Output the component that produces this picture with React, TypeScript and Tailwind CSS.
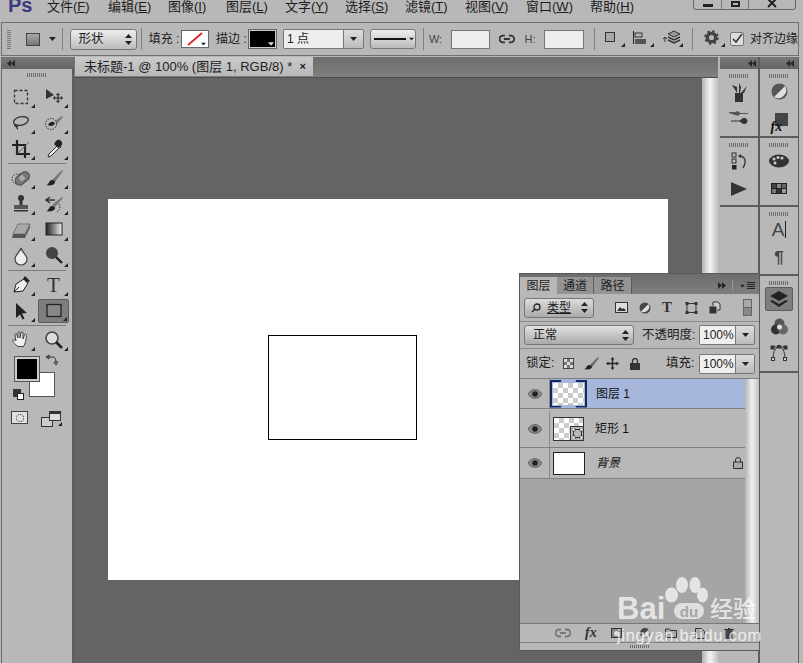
import React from "react";

const Grip = ({ className = "" }: { className?: string }) => (
  <div className={"h-[4px] w-[20px] bg-[repeating-linear-gradient(90deg,#6d6d6d_0_1px,transparent_1px_2px)] " + className} />
);

const Corner = () => (
  <svg className="absolute right-[1px] bottom-[1px]" width="4" height="4" viewBox="0 0 4 4"><path d="M4 0V4H0Z" fill="#222" /></svg>
);

const Ic = ({ children, s = 20, className = "" }: { children: React.ReactNode; s?: number; className?: string }) => (
  <svg width={s} height={s} viewBox="0 0 20 20" className={className}>{children}</svg>
);

const toolIcons: Record<string, React.ReactNode> = {
  marquee: <rect x="3.500" y="3.500" width="13" height="13" fill="none" stroke="#333" strokeWidth="1.300" strokeDasharray="3 2" />,
  move: <g fill="#333"><path d="M2 2 L10 8 L2 12Z" /><path d="M14 6l2 2h-1.400v2.400H17V9l2 2-2 2v-1.400h-2.400V14H16l-2 2-2-2h1.400v-2.400H11V13l-2-2 2-2v1.400h2.400V8H12z" stroke="#333" strokeWidth=".2" /></g>,
  lasso: <g fill="none" stroke="#333" strokeWidth="1.400"><ellipse cx="10" cy="8" rx="7.500" ry="4.200" transform="rotate(-12 10 8)" /><path d="M4 11c-1 2 1 3 2 2s-1 3 1 3" /></g>,
  quick: <g><circle cx="7" cy="11" r="5.500" fill="none" stroke="#222" strokeDasharray="1.500 1.200" /><path d="M4 12c2-4 5-4 7-2-1 3-4 4-7 2z" fill="#222" /><path d="M11 8l7-5 1 1-6 7z" fill="#777" /></g>,
  crop: <g fill="none" stroke="#222" strokeWidth="2.200"><path d="M6 1v14h13" /><path d="M1 6h13v13" /><path d="M6 15L18 3" strokeWidth=".8" stroke="#555" /></g>,
  picker: <g><path d="M12 3l5 5-2 1-8 8-3 1 1-3 8-8z" fill="#eee" stroke="#333" /><path d="M12 2c2-2 4-1 5 0s2 3 0 5l-3 2-4-4z" fill="#222" /></g>,
  heal: <g><circle cx="6" cy="11" r="5" fill="none" stroke="#333" strokeDasharray="1.500 1.200" /><rect x="3" y="6" width="16" height="9" rx="4.500" transform="rotate(-40 11 10)" fill="#777" stroke="#444" /><rect x="8.500" y="7.500" width="5" height="5" transform="rotate(-40 11 10)" fill="#aaa" /></g>,
  brush: <g><path d="M8 12L18 2l1 1-8 11z" fill="#777" /><path d="M2 17c3 0 3-5 6-5 2 0 3 1 3 2 0 3-5 4-9 3z" fill="#222" /></g>,
  stamp: <g fill="#333"><circle cx="10" cy="4" r="3" /><rect x="8.500" y="6" width="3" height="5" /><rect x="3" y="11" width="14" height="4" fill="#555" /><rect x="3" y="16" width="14" height="1.500" /></g>,
  history: <g><path d="M3 6h8M6 3L2 6l4 3" fill="none" stroke="#333" strokeWidth="1.500" /><path d="M8 11L18 3l1 1-8 9z" fill="#777" /><path d="M2 17c3 0 3-5 6-5 2 0 3 1 3 2 0 3-5 4-9 3z" fill="#222" /><path d="M15 10c2 3 1 6-2 8" fill="none" stroke="#333" strokeDasharray="1.500 1.200" /></g>,
  eraser: <g><path d="M7 4h12l-5 10H2z" fill="#aaa" stroke="#777" /><path d="M2 14h12v4H1z" fill="#555" /><path d="M14 14l5-10v4l-5 10z" fill="#666" /></g>,
  gradient: <g><defs><linearGradient id="gr"><stop offset="0" stopColor="#222" /><stop offset="1" stopColor="#eee" /></linearGradient></defs><rect x="2" y="3" width="16" height="12" fill="url(#gr)" stroke="#222" strokeWidth="1" /></g>,
  drop: <path d="M10 2c1 4 6 7 6 11a6 6 0 0 1-12 0c0-4 5-7 6-11z" fill="#eee" stroke="#444" strokeWidth="1.200" />,
  burn: <g><circle cx="8" cy="7" r="6" fill="#444" /><path d="M12 11l6 6" stroke="#222" strokeWidth="2.400" /></g>,
  pen: <g><path d="M3 17l2-8 8-5 4 4-5 8z" fill="#eee" stroke="#222" /><path d="M12 4l2-3 5 5-3 2z" fill="#222" /><path d="M3 17l5-5" stroke="#222" /></g>,
  path: <path d="M5 2l11 10-5 .5 2.500 5-2 1-2.500-5-4 3.500z" fill="#222" />,
  shape: <g><rect x="3" y="3.500" width="14" height="12" fill="#888" stroke="#222" strokeWidth="1.300" /></g>,
  hand: <path d="M5 15c-2-2-4-4-3-5s3 1 3 1L4 5c0-1.500 2-1.500 2 0l1 3V3c0-1.500 2-1.500 2 0v5l1-5c0-1.500 2-1.500 2 0v6l1.500-4c.5-1.500 2-1 2 .5-.5 4-1 8-3 11H7z" fill="#eee" stroke="#333" strokeWidth=".9" />,
  zoom: <g><circle cx="8" cy="8" r="6" fill="#ddd" stroke="#444" strokeWidth="1.600" /><path d="M12 12l6 6" stroke="#222" strokeWidth="2.600" /></g>,
};

const Tool = ({ name, active = false }: { name: string; active?: boolean }) => (
  <div className={"relative flex h-[24px] w-[31px] items-center justify-center rounded-[2px] " + (active ? "border border-[#5c5c5c] bg-[#7e7e7e]" : "")}>
    {name === "text" ? (
      <span className="font-['Liberation_Serif'] text-[21px] leading-none text-[#333]">T</span>
    ) : (
      <Ic s={20}>{toolIcons[name]}</Ic>
    )}
    <Corner />
  </div>
);

const Rows = ({ rows }: { rows: [string, string][] }) => (
  <div className="flex flex-col gap-[2px]">
    {rows.map(([a, b], i) => (
      <div key={i} className="flex justify-between px-[3px]">
        <Tool name={a} />
        <Tool name={b} active={b === "shape"} />
      </div>
    ))}
  </div>
);

const HLine = () => <div className="mx-[6px] my-[2px] h-[1px] bg-[#7c7c7c]" />;

const Collapse = ({ right = false }: { right?: boolean }) => (
  <svg width="8" height="7" viewBox="0 0 8 7" className={right ? "rotate-180" : ""}><path d="M4 0v7L0 3.500zM8 0v7L4 3.500z" fill="#262626" /></svg>
);

const Toolbar = () => (
  <div className="flex w-[74px] shrink-0 flex-col pl-[1px]">
    <div className="flex h-[12px] items-center bg-gradient-to-b from-[#777] to-[#666] pl-[6px] text-[#222]">
      <Collapse />
    </div>
    <div className="flex flex-1 flex-col border-l border-r-2 border-l-[#6b6b6b] border-r-[#5c5c5c] bg-[#b8b8b8]">
      <Grip className="mx-auto mt-[4px]" />
      <div className="mt-[8px]" />
      <Rows rows={[["marquee", "move"], ["lasso", "quick"], ["crop", "picker"]]} />
      <HLine />
      <Rows rows={[["heal", "brush"], ["stamp", "history"], ["eraser", "gradient"], ["drop", "burn"]]} />
      <HLine />
      <Rows rows={[["pen", "text"], ["path", "shape"]]} />
      <HLine />
      <Rows rows={[["hand", "zoom"]]} />
      <div className="relative mt-[5px] h-[44px]">
        <div className="absolute left-[27px] top-[15px] h-[25px] w-[26px] border border-[#555] bg-white" />
        <div className="absolute left-[13px] top-0 h-[24px] w-[24px] border-2 border-[#ccc] bg-black outline outline-1 outline-[#555]" />
        <svg className="absolute left-[43px] top-[-3px]" width="14" height="14" viewBox="0 0 14 14"><path d="M2 3h6c2 0 3 2 3 5M1 3l3-2v4zM11 11l-2-3h4z" fill="none" stroke="#333" /></svg>
        <div className="absolute left-[11px] top-[32px] h-[8px] w-[8px] bg-[#333]" />
        <div className="absolute left-[15px] top-[36px] h-[7px] w-[7px] border border-[#222] bg-white" />
      </div>
      <div className="mt-[10px] flex justify-between px-[9px]">
        <div className="flex h-[13px] w-[17px] items-center justify-center border border-[#444] bg-[#e2e2e2]">
          <div className="h-[8px] w-[8px] rounded-full border border-dotted border-[#333]" />
        </div>
        <div className="relative h-[16px] w-[22px]">
          <div className="absolute bottom-0 left-0 h-[10px] w-[12px] border border-[#333] bg-[#ccc]" />
          <div className="absolute right-[2px] top-0 h-[10px] w-[12px] border border-t-[3px] border-[#333] bg-[#ddd]" />
          <Corner />
        </div>
      </div>
    </div>
  </div>
);

const Sep = ({ className = "" }: { className?: string }) => <div className={"h-[22px] w-[1px] bg-[#808080] " + className} />;
const Down = ({ className = "" }: { className?: string }) => (
  <svg width="7" height="4" viewBox="0 0 7 4" className={className}><path d="M0 0h7L3.500 4z" fill="#222" /></svg>
);
const Updown = () => (
  <svg width="7" height="11" viewBox="0 0 7 11"><path d="M3.500 0L7 4H0zM3.500 11L0 7h7z" fill="#222" /></svg>
);
const Field = ({ className = "" }: { className?: string }) => (
  <div className={"h-[19px] border border-[#777] bg-[#eeeeee] " + className} />
);

const Link = ({ color = "#333", className = "" }: { color?: string; className?: string }) => (
  <svg width="16" height="10" viewBox="0 0 16 10" fill="none" stroke={color} strokeWidth="1.800" className={className}>
    <path d="M6 1.500H4a3.500 3.500 0 0 0 0 7h2M10 1.500h2a3.500 3.500 0 0 1 0 7h-2M5 5h6" />
  </svg>
);

const menus: [string, string, string][] = [
  ["文件", "F", "w-[61px]"], ["编辑", "E", "w-[60px]"], ["图像", "I", "w-[58px]"], ["图层", "L", "w-[59px]"], ["文字", "Y", "w-[60px]"],
  ["选择", "S", "w-[60px]"], ["滤镜", "T", "w-[60px]"], ["视图", "V", "w-[61px]"], ["窗口", "W", "w-[64px]"], ["帮助", "H", "w-[50px]"],
];

const MenuBar = () => (
  <div className="relative flex h-[22px] items-start overflow-hidden">
    <span className="ml-[8px] mt-[-6px] w-[39px] text-[20px] font-bold leading-[22px] text-[#3a3a80]">Ps</span>
    <div className="flex">
      {menus.map(([m, k, w]) => (
        <span key={k} className={"whitespace-nowrap text-[13px] leading-[13px] text-[#1c1c1c] " + w}>
          {m}(<span className="underline">{k}</span>)
        </span>
      ))}
    </div>
    <div className="absolute right-[7px] top-[-8px] flex h-[18px] w-[103px] rounded-[3px] border border-[#666] bg-[#b8b8b8]">
      <div className="flex w-[28px] items-center justify-center border-r border-[#777]"><div className="mt-[8px] h-[3px] w-[10px] bg-[#222]" /></div>
      <div className="flex w-[27px] items-center justify-center border-r border-[#777]"><div className="mt-[6px] h-[6px] w-[9px] border-2 border-[#222]" /></div>
      <div className="flex flex-1 justify-center"><svg width="10" height="10" className="mt-[6px]" viewBox="0 0 10 10"><path d="M1 0l8 8M9 0L1 8" stroke="#222" strokeWidth="2" /></svg></div>
    </div>
  </div>
);

const OptionsBar = () => (
  <div className="flex h-[34px] w-[798px] items-center overflow-hidden border border-[#6f6f6f] bg-[#b8b8b8] pl-[5px] text-[12px] text-[#1c1c1c]">
    <div className="h-[20px] w-[4px] bg-[repeating-linear-gradient(0deg,#777_0_1px,transparent_1px_2px)]" />
    <div className="ml-[15px] h-[13px] w-[14px] border border-[#444] bg-gradient-to-b from-[#aaa] to-[#777]" />
    <Down className="ml-[9px]" />
    <Sep className="ml-[6px]" />
    <div className="ml-[7px] flex h-[21px] w-[68px] items-center justify-between rounded-[3px] border border-[#777] bg-gradient-to-b from-[#eee] to-[#bbb] pl-[8px] pr-[4px] text-[12.500px]">
      形状 <Updown />
    </div>
    <Sep className="ml-[4px]" />
    <span className="ml-[7px] w-[33px] whitespace-nowrap">填充 :</span>
    <div className="relative h-[18px] w-[28px] border border-[#666] bg-white">
      <svg width="26" height="16"><path d="M6 14L20 2" stroke="#d22" strokeWidth="1.800" /></svg>
      <Down className="absolute bottom-[1px] right-[1px] scale-75" />
    </div>
    <span className="ml-[7px] w-[34px] whitespace-nowrap">描边 :</span>
    <div className="relative h-[18px] w-[27px] border border-[#ccc] bg-black outline outline-1 outline-[#666]">
      <svg className="absolute bottom-[1px] right-[1px]" width="6" height="4" viewBox="0 0 7 4"><path d="M0 0h7L3.500 4z" fill="#ddd" /></svg>
    </div>
    <div className="ml-[7px] flex h-[20px] w-[82px] items-stretch overflow-hidden rounded-[2px] border border-[#777]">
      <div className="flex-1 bg-[#eeeeee] pl-[3px] leading-[18px]"><span className="font-['Liberation_Sans']">1</span> 点</div>
      <div className="flex w-[20px] items-center justify-center border-l border-[#777] bg-gradient-to-b from-[#ddd] to-[#bbb]"><Down /></div>
    </div>
    <div className="ml-[6px] flex h-[20px] w-[47px] items-center gap-[2px] rounded-[3px] border border-[#777] bg-gradient-to-b from-[#eee] to-[#bbb] pl-[3px]">
      <div className="h-[2px] w-[32px] bg-[#111]" />
      <Down className="scale-75" />
    </div>
    <Sep className="ml-[7px]" />
    <span className="ml-[5px] w-[22px] font-['Liberation_Sans'] text-[11px] text-[#444]">W:</span>
    <Field className="w-[40px]" />
    <Link className="ml-[9px]" />
    <span className="ml-[10px] w-[20px] font-['Liberation_Sans'] text-[11px] text-[#444]">H:</span>
    <Field className="w-[40px]" />
    <Sep className="ml-[10px]" />
    <div className="relative ml-[10px] h-[18px] w-[22px]">
      <div className="mt-[2px] h-[10px] w-[10px] border border-[#333] bg-[#a8a8a8]" />
      <Corner />
    </div>
    <div className="relative ml-[7px] h-[18px] w-[22px]">
      <svg width="14" height="15" viewBox="0 0 14 15"><path d="M.500 1v13" stroke="#222" /><rect x="2" y="3" width="7" height="4" fill="none" stroke="#333" /><rect x="2" y="9" width="11" height="5" fill="#555" /></svg>
      <Corner />
    </div>
    <div className="relative ml-[8px] h-[18px] w-[22px]">
      <svg width="19" height="16" viewBox="0 0 19 16"><path d="M2 12V8M0 9l2-2 2 2" stroke="#333" fill="none" /><path d="M11 1l6 3-6 3-6-3z" fill="#999" stroke="#333" /><path d="M5 7l6 3 6-3M5 10l6 3 6-3" fill="none" stroke="#333" strokeWidth="1.500" /></svg>
      <Corner />
    </div>
    <Sep className="ml-[8px]" />
    <div className="relative ml-[11px] h-[18px] w-[22px]">
      <svg width="15" height="15" viewBox="0 0 16 16"><circle cx="8" cy="8" r="4.500" fill="none" stroke="#444" strokeWidth="3.500" /><circle cx="8" cy="8" r="6.500" fill="none" stroke="#444" strokeWidth="2.500" strokeDasharray="2.500 2.600" /></svg>
      <Corner />
    </div>
    <div className="ml-[4px] flex h-[14px] w-[14px] items-center justify-center rounded-[2px] border border-[#777] bg-[#ddd]">
      <svg width="12" height="12" viewBox="0 0 12 12"><path d="M2 6l3 3 6-8" fill="none" stroke="#333" strokeWidth="1.500" /></svg>
    </div>
    <span className="ml-[6px] whitespace-nowrap text-[12px]">对齐边缘</span>
  </div>
);

const DocArea = () => (
  <div className="flex min-w-0 flex-1 flex-col">
    <div className="flex h-[20px] items-start bg-gradient-to-b from-[#6d6d6d] to-[#808080] pl-[1px]">
      <div className="flex h-[19px] w-[238px] items-center justify-between bg-gradient-to-b from-[#cacaca] to-[#b8b8b8] pl-[9px] pr-[7px] text-[13px] leading-none text-[#222]">
        <span className="whitespace-nowrap">未标题-1 @ 100% (图层 1, RGB/8) *</span>
        <span className="text-[11px] font-bold">×</span>
      </div>
    </div>
    <div className="flex flex-1 border-t border-[#4f4f4f] bg-[#646464]">
      <div className="flex-1 overflow-hidden">
        <div className="relative ml-[34px] mt-[121px] h-[381px] w-[560px] bg-white">
          <div className="absolute left-[160px] top-[136px] h-[105px] w-[149px] border border-black" />
        </div>
      </div>
      <div className="w-[16px] bg-gradient-to-r from-[#b4b4b4] via-[#f4f4f4] to-[#c2c2c2]" />
    </div>
  </div>
);

const DockSection = ({ h, children, gap }: { h: string; children?: React.ReactNode; gap: string }) => (
  <div className={"flex flex-col items-center border-b-2 border-[#5c5c5c] bg-[#b8b8b8] " + h}>
    <Grip className="mt-[5px]" />
    <div className={"mt-[3px] flex flex-col items-center " + gap}>{children}</div>
  </div>
);

const DockBtn = ({ children }: { children: React.ReactNode }) => (
  <div className="flex h-[21px] items-center justify-center">{children}</div>
);

const Dock = () => (
  <div className="flex shrink-0 pl-[2px]">
    <div className="flex w-[38px] flex-col">
      <div className="flex h-[12px] items-center justify-end bg-gradient-to-b from-[#777] to-[#666] pr-[2px]"><Collapse /></div>
      <DockSection h="h-[69px]" gap="gap-[5px]">
        <DockBtn><svg width="18" height="20" viewBox="0 0 18 20"><rect x="5" y="11" width="8" height="9" fill="#333" /><path d="M7 11L2 3l5 2zM9 11V1l2 4-1 6zM11 11l6-7-3 7z" fill="#333" /></svg></DockBtn>
        <DockBtn><svg width="20" height="16" viewBox="0 0 20 16"><path d="M0 2h6c2-1 4-1 5 1h8v1h-8c-1 2-3 2-5 1L0 3z" fill="#555" /><path d="M2 11h9M11 11c3-4 7-3 7 0s-4 4-7 0z" fill="#333" stroke="#333" /></svg></DockBtn>
      </DockSection>
      <DockSection h="h-[69px]" gap="gap-[7px]">
        <DockBtn><svg width="17" height="18" viewBox="0 0 17 18"><rect x="1" y="1" width="4" height="4" fill="none" stroke="#333" /><rect x="1" y="7" width="4" height="4" fill="none" stroke="#333" /><rect x="1" y="13" width="4.500" height="4.500" fill="#222" /><path d="M8 4c6 0 8 5 4 12" fill="none" stroke="#333" strokeWidth="1.300" /><path d="M7 4l3-2v4z" fill="#333" /></svg></DockBtn>
        <DockBtn><svg width="16" height="14" viewBox="0 0 16 14"><path d="M0 0l16 7-16 7z" fill="#333" /></svg></DockBtn>
      </DockSection>
      <div className="flex-1 bg-[#b8b8b8]" />
    </div>
    <div className="w-[2px] bg-[#5c5c5c]" />
    <div className="flex w-[38px] flex-col">
      <div className="flex h-[12px] items-center justify-end bg-gradient-to-b from-[#777] to-[#666] pr-[4px]"><Collapse /></div>
      <DockSection h="h-[69px]" gap="gap-[10px]">
        <DockBtn><svg width="17" height="17" viewBox="0 0 17 17"><circle cx="8.500" cy="8.500" r="8" fill="#555" /><path d="M14 3L3 14A8 8 0 0 0 14 3z" fill="#ddd" /></svg></DockBtn>
        <DockBtn><div className="relative h-[20px] w-[17px]"><div className="absolute right-0 top-0 h-[13px] w-[13px] bg-[#444]" /><span className="absolute bottom-[-1px] left-0 font-['Liberation_Serif'] text-[14px] font-bold italic leading-none text-[#111]">fx</span></div></DockBtn>
      </DockSection>
      <DockSection h="h-[69px]" gap="gap-[7px]">
        <DockBtn><svg width="20" height="14" viewBox="0 0 20 14"><ellipse cx="10" cy="7" rx="10" ry="6.500" fill="#333" /><circle cx="5" cy="5" r="1.500" fill="#ccc" /><circle cx="9" cy="3.500" r="1.500" fill="#ccc" /><circle cx="13" cy="4" r="1.500" fill="#ccc" /><circle cx="6" cy="9" r="1.500" fill="#ccc" /></svg></DockBtn>
        <DockBtn><div className="grid h-[11px] w-[16px] grid-cols-3 grid-rows-2 gap-[1px] bg-[#222] p-[1px]"><i className="bg-[#444]" /><i className="bg-[#888]" /><i className="bg-[#666]" /><i className="bg-[#777]" /><i className="bg-[#333]" /><i className="bg-[#999]" /></div></DockBtn>
      </DockSection>
      <DockSection h="h-[69px]" gap="gap-[7px]">
        <DockBtn><span className="flex items-center font-['Liberation_Sans'] text-[19px] leading-none text-[#444]">A<span className="ml-[1px] h-[17px] w-[1px] bg-[#222]" /></span></DockBtn>
        <DockBtn><span className="font-['Liberation_Sans'] text-[17px] font-bold leading-none text-[#444]">¶</span></DockBtn>
      </DockSection>
      <div className="flex h-[97px] flex-col items-center border-b-2 border-[#5c5c5c] bg-[#b8b8b8]">
        <Grip className="mt-[5px]" />
        <div className="mt-[2px] flex h-[24px] w-[28px] items-center justify-center rounded-[2px] border border-[#5c5c5c] bg-[#7e7e7e]">
          <svg width="18" height="17" viewBox="0 0 18 17"><path d="M9 0l9 5-9 5-9-5z" fill="#222" /><path d="M2 9l7 4 7-4 2 1-9 6-9-6z" fill="#222" /></svg>
        </div>
        <div className="mt-[5px] flex h-[21px] items-center"><svg width="17" height="17" viewBox="0 0 17 17"><circle cx="8.500" cy="5.500" r="5" fill="#555" /><circle cx="5" cy="11.500" r="5" fill="#333" /><circle cx="12" cy="11.500" r="5" fill="#666" /><circle cx="8.500" cy="9" r="2.500" fill="#ddd" /></svg></div>
        <div className="mt-[7px] flex h-[18px] items-center"><svg width="18" height="16" viewBox="0 0 18 16" fill="none" stroke="#333"><path d="M3 2h12" /><path d="M3 14C3 6 6 2 9 2s6 4 6 12" /><rect x="1" y="1" width="3" height="3" fill="#333" /><rect x="14" y="1" width="3" height="3" fill="#333" /><rect x="7.500" y="0" width="3" height="3" fill="#333" /><rect x="1.500" y="12.500" width="3" height="3" fill="#ccc" /><rect x="13.500" y="12.500" width="3" height="3" fill="#ccc" /></svg></div>
      </div>
      <div className="flex-1 bg-[#b8b8b8]" />
    </div>
    <div className="w-[1px] bg-[#5c5c5c]" />
    <div className="w-[4px] bg-[#b8b8b8]" />
  </div>
);

const Spin = ({ w }: { w: string }) => (
  <div className={"flex h-[20px] overflow-hidden rounded-[2px] border border-[#777] " + w}>
    <div className="flex-1 bg-[#efefef] pl-[3px] font-['Liberation_Sans'] text-[12px] leading-[18px] text-[#222]">100%</div>
    <div className="flex w-[19px] items-center justify-center border-l border-[#777] bg-gradient-to-b from-[#ddd] to-[#bbb]"><Down /></div>
  </div>
);

const Eye = () => (
  <svg width="14" height="10" viewBox="0 0 14 10"><path d="M0 5c3-6 11-6 14 0-3 6-11 6-14 0z" fill="#888" stroke="#444" strokeWidth=".6" /><circle cx="7" cy="5" r="2.800" fill="#222" /></svg>
);

const Checker = "bg-[conic-gradient(#ccc_25%,#fff_0_50%,#ccc_0_75%,#fff_0)] bg-[length:10px_10px]";

const Layer = ({ h, name, thumb, active = false, italic = false, lock = false, nameMl }: { h: string; name: string; thumb: React.ReactNode; active?: boolean; italic?: boolean; lock?: boolean; nameMl: string }) => (
  <div className={"flex items-stretch border-b border-[#808080] " + h + (active ? " bg-[#a6b7db]" : " bg-[#b8b8b8]")}>
    <div className="flex w-[30px] items-center justify-center border-r border-[#8a8a8a] bg-[#b8b8b8]"><Eye /></div>
    <div className="ml-[3px] flex items-center">{thumb}</div>
    <span className={"flex flex-1 items-center whitespace-nowrap text-[12px] text-[#111] " + nameMl + (italic ? " italic" : "")}>{name}</span>
    {lock && (
      <div className="mr-[16px] flex items-center"><svg width="10" height="12" viewBox="0 0 10 12"><path d="M2.500 5V3a2.500 2.500 0 0 1 5 0v2" fill="none" stroke="#333" /><rect x=".5" y="5" width="9" height="6.500" fill="#aaa" stroke="#333" /></svg></div>
    )}
  </div>
);

const LayersPanel = () => (
  <div className="absolute left-[519px] top-[273px] flex h-[378px] w-[241px] flex-col border border-[#5a5a5a] bg-[#b8b8b8] text-[#1c1c1c]">
    <div className="flex h-[20px] items-end bg-gradient-to-b from-[#6d6d6d] to-[#7e7e7e] text-[12px] leading-[16px]">
      <div className="flex h-[17px] w-[37px] items-center justify-center bg-[#b8b8b8]">图层</div>
      <div className="flex h-[17px] w-[37px] items-center justify-center border-r border-[#5c5c5c] bg-[#949494]">通道</div>
      <div className="flex h-[17px] w-[38px] items-center justify-center border-r border-[#5c5c5c] bg-[#949494]">路径</div>
      <div className="ml-auto mr-[4px] flex h-[17px] items-center gap-[6px]">
        <Collapse right />
        <div className="h-[11px] w-[1px] bg-[#999]" />
        <div className="flex items-center gap-[1px]"><Down className="scale-75" /><div className="h-[7px] w-[8px] bg-[repeating-linear-gradient(0deg,#222_0_1px,transparent_1px_2px)]" /></div>
      </div>
    </div>
    <div className="flex h-[28px] items-center border-b border-[#8a8a8a] pl-[4px]">
      <div className="flex h-[20px] w-[70px] items-center rounded-[3px] border border-[#777] bg-gradient-to-b from-[#ddd] to-[#aaa] pl-[6px] pr-[5px] text-[12px]">
        <svg width="10" height="10" viewBox="0 0 10 10"><circle cx="6" cy="4" r="3" fill="none" stroke="#222" strokeWidth="1.300" /><path d="M4 6L1 9" stroke="#222" strokeWidth="1.500" /></svg>
        <span className="ml-[6px] flex-1 underline">类型</span>
        <Updown />
      </div>
      <div className="ml-[21px] flex items-center gap-[11px]">
        <svg width="13" height="11" viewBox="0 0 13 11"><rect x=".5" y=".5" width="12" height="10" fill="#ddd" stroke="#333" /><path d="M2 9l3-4 2 2 2-1 2 3z" fill="#333" /></svg>
        <svg width="12" height="12" viewBox="0 0 12 12"><circle cx="6" cy="6" r="5.500" fill="#444" /><path d="M9.500 2L2 9.500A5.500 5.500 0 0 0 9.500 2z" fill="#ddd" /></svg>
        <span className="w-[12px] font-['Liberation_Serif'] text-[15px] font-bold leading-none text-[#333]">T</span>
        <svg width="13" height="12" viewBox="0 0 12 12"><rect x="1.500" y="1.500" width="9" height="9" fill="none" stroke="#333" /><rect x="0" y="0" width="3" height="3" fill="#333" /><rect x="9" y="0" width="3" height="3" fill="#333" /><rect x="0" y="9" width="3" height="3" fill="#333" /><rect x="9" y="9" width="3" height="3" fill="#333" /></svg>
        <svg width="12" height="13" viewBox="0 0 12 13"><path d="M4 5V1h5l2 2v6H8" fill="#ccc" stroke="#333" /><rect x=".5" y="5.500" width="7" height="7" fill="#333" /></svg>
      </div>
      <div className="ml-[22px] flex h-[17px] w-[9px] flex-col border border-[#666]"><div className="flex-1 bg-[#aaa]" /><div className="flex-1 border-t border-[#666] bg-[#888]" /></div>
    </div>
    <div className="flex h-[27px] items-center border-b border-[#8a8a8a] pl-[4px]">
      <div className="flex h-[20px] w-[110px] items-center justify-between rounded-[3px] border border-[#777] bg-gradient-to-b from-[#e2e2e2] to-[#aaa] pl-[8px] pr-[4px] text-[12px]">正常 <Updown /></div>
      <span className="ml-[8px] w-[57px] whitespace-nowrap text-[12.500px]">不透明度:</span>
      <Spin w="w-[56px]" />
    </div>
    <div className="flex h-[30px] items-center border-b border-[#808080] pl-[6px] text-[12.500px]">
      <span className="w-[37px] whitespace-nowrap">锁定:</span>
      <div className="h-[11px] w-[11px] border border-[#444] bg-[conic-gradient(#777_25%,#ddd_0_50%,#777_0_75%,#ddd_0)] bg-[length:6px_6px]" />
      <svg className="ml-[10px]" width="15" height="13" viewBox="0 0 15 13"><path d="M6 8L14 0l1 1-7 9z" fill="#666" /><path d="M0 12c3 0 2-4 5-4 2 0 3 1 3 2 0 2-4 3-8 2z" fill="#222" /></svg>
      <svg className="ml-[7px]" width="13" height="13" viewBox="0 0 13 13"><path d="M6.500 0l2 2.500h-1.300v3.300h3.300V4.500l2.500 2-2.500 2V7.200H7.200v3.300h1.300l-2 2.500-2-2.500h1.300V7.200H2.500v1.300L0 6.500l2.500-2v1.300h3.300V2.500H4.500z" fill="#222" /></svg>
      <svg className="ml-[11px]" width="10" height="12" viewBox="0 0 10 12"><path d="M2.500 5V3a2.500 2.500 0 0 1 5 0v2" fill="none" stroke="#333" strokeWidth="1.300" /><rect x="0" y="5" width="10" height="7" fill="#333" /></svg>
      <span className="ml-[26px] w-[33px] whitespace-nowrap">填充:</span>
      <Spin w="w-[56px]" />
    </div>
    <div className="relative flex flex-1 flex-col">
      <div className="absolute bottom-0 right-0 top-0 z-10 w-[14px] bg-gradient-to-r from-[#b4b4b4] via-[#f0f0f0] to-[#c0c0c0]" />
      <div className="flex flex-1 flex-col bg-[#a5a5a5]">
        <Layer h="h-[30px]" active name="图层 1" nameMl="ml-[12px]" thumb={
          <div className="relative">
            <div className={"h-[22px] w-[31px] " + Checker} />
            <div className="absolute -inset-[3px] border-2 border-[#142a5e] [clip-path:polygon(0_0,30%_0,30%_100%,70%_100%,70%_0,100%_0,100%_100%,0_100%)]" />
          </div>
        } />
        <Layer h="h-[39px] pt-[2px]" name="矩形 1" nameMl="ml-[11px]" thumb={
          <div className={"relative h-[24px] w-[31px] border border-[#333] " + Checker}>
            <div className="absolute bottom-0 right-0 flex h-[14px] w-[13px] items-center justify-center border-l border-t border-[#333] bg-[#b8b8b8]">
              <svg width="11" height="11" viewBox="0 0 11 11"><rect x="1.500" y="1.500" width="8" height="8" fill="none" stroke="#333" /><rect x="0" y="0" width="3" height="3" fill="#fff" stroke="#333" strokeWidth=".6" /><rect x="8" y="0" width="3" height="3" fill="#fff" stroke="#333" strokeWidth=".6" /><rect x="0" y="8" width="3" height="3" fill="#fff" stroke="#333" strokeWidth=".6" /><rect x="8" y="8" width="3" height="3" fill="#fff" stroke="#333" strokeWidth=".6" /></svg>
            </div>
          </div>
        } />
        <Layer h="h-[31px]" italic lock name="背景" nameMl="ml-[11px]" thumb={<div className="h-[23px] w-[32px] border border-[#222] bg-white" />} />
      </div>
      <div className="z-20 flex h-[19px] items-center border-t border-[#777] bg-[#b8b8b8] pl-[35px]">
        <Link color="#777" />
        <span className="ml-[14px] w-[11px] font-['Liberation_Serif'] text-[14px] font-bold italic leading-none text-[#333]">fx</span>
        <div className="ml-[15px] flex h-[10px] w-[11px] items-center justify-center border border-[#333] bg-[#888]"><div className="h-[5px] w-[5px] rounded-full bg-[#ddd]" /></div>
        <svg className="ml-[18px]" width="10" height="10" viewBox="0 0 10 10"><circle cx="5" cy="5" r="5" fill="#444" /><path d="M8.500 1.500L1.500 8.500A5 5 0 0 0 8.500 1.500z" fill="#ccc" /></svg>
        <svg className="ml-[15px]" width="12" height="10" viewBox="0 0 12 10"><path d="M.5 9.500V1h4l1 1.500h6v7z" fill="#aaa" stroke="#333" /></svg>
        <svg className="ml-[18px]" width="10" height="11" viewBox="0 0 10 11"><path d="M.5.5h6l3 3v7h-9z" fill="#aaa" stroke="#333" /></svg>
        <svg className="ml-[19px]" width="10" height="11" viewBox="0 0 10 11"><rect x="1.500" y="2" width="7" height="9" fill="#444" /><path d="M0 1.500h10M4 .5h2" stroke="#333" /></svg>
      </div>
      <div className="z-20 flex h-[8px] items-center justify-center border-t border-[#808080] bg-[#b8b8b8]"><Grip className="!h-[3px]" /></div>
    </div>
  </div>
);

const Watermark = () => (
  <div className="pointer-events-none absolute left-[617px] top-[576px] z-30 h-[70px] w-[146px] text-white">
    <svg className="absolute left-[46px] top-0 opacity-70" width="46" height="28" viewBox="0 0 46 28">
      <ellipse cx="8.500" cy="19" rx="6.500" ry="7.500" fill="#fff" />
      <ellipse cx="19" cy="9" rx="6" ry="8" fill="#fff" />
      <ellipse cx="32" cy="9" rx="5.500" ry="8" fill="#fff" />
      <ellipse cx="39.500" cy="19" rx="5.500" ry="7.500" fill="#fff" />
    </svg>
    <div className="absolute left-0 top-[18px] h-[30px] font-['Liberation_Sans'] text-[31px] font-bold leading-[30px] opacity-70">Bai</div>
    <div className="absolute left-[57px] top-[27px] flex h-[16px] w-[30px] items-center justify-center rounded-[8px] bg-[#dedede] font-['Liberation_Sans'] text-[15px] font-bold leading-none text-[#a5a5a5]">du</div>
    <span className="absolute left-[93px] top-[18px] whitespace-nowrap text-[23px] font-medium leading-[30px] opacity-70">经验</span>
    <span className="absolute left-0 top-[49px] whitespace-nowrap font-['Liberation_Sans'] text-[16.500px] leading-[20px] tracking-[.7px] opacity-75">jingyan.baidu.com</span>
  </div>
);

export default function App() {
  return (
    <div className="relative flex h-[663px] w-[803px] flex-col overflow-hidden bg-[#b8b8b8] font-['Liberation_Sans','Noto_Sans_CJK_SC',sans-serif]">
      <MenuBar />
      <div className="pl-[1px]"><OptionsBar /></div>
      <div className="flex min-h-0 flex-1 pt-[1px]">
        <Toolbar />
        <DocArea />
        <Dock />
      </div>
      <LayersPanel />
      <Watermark />
    </div>
  );
}
